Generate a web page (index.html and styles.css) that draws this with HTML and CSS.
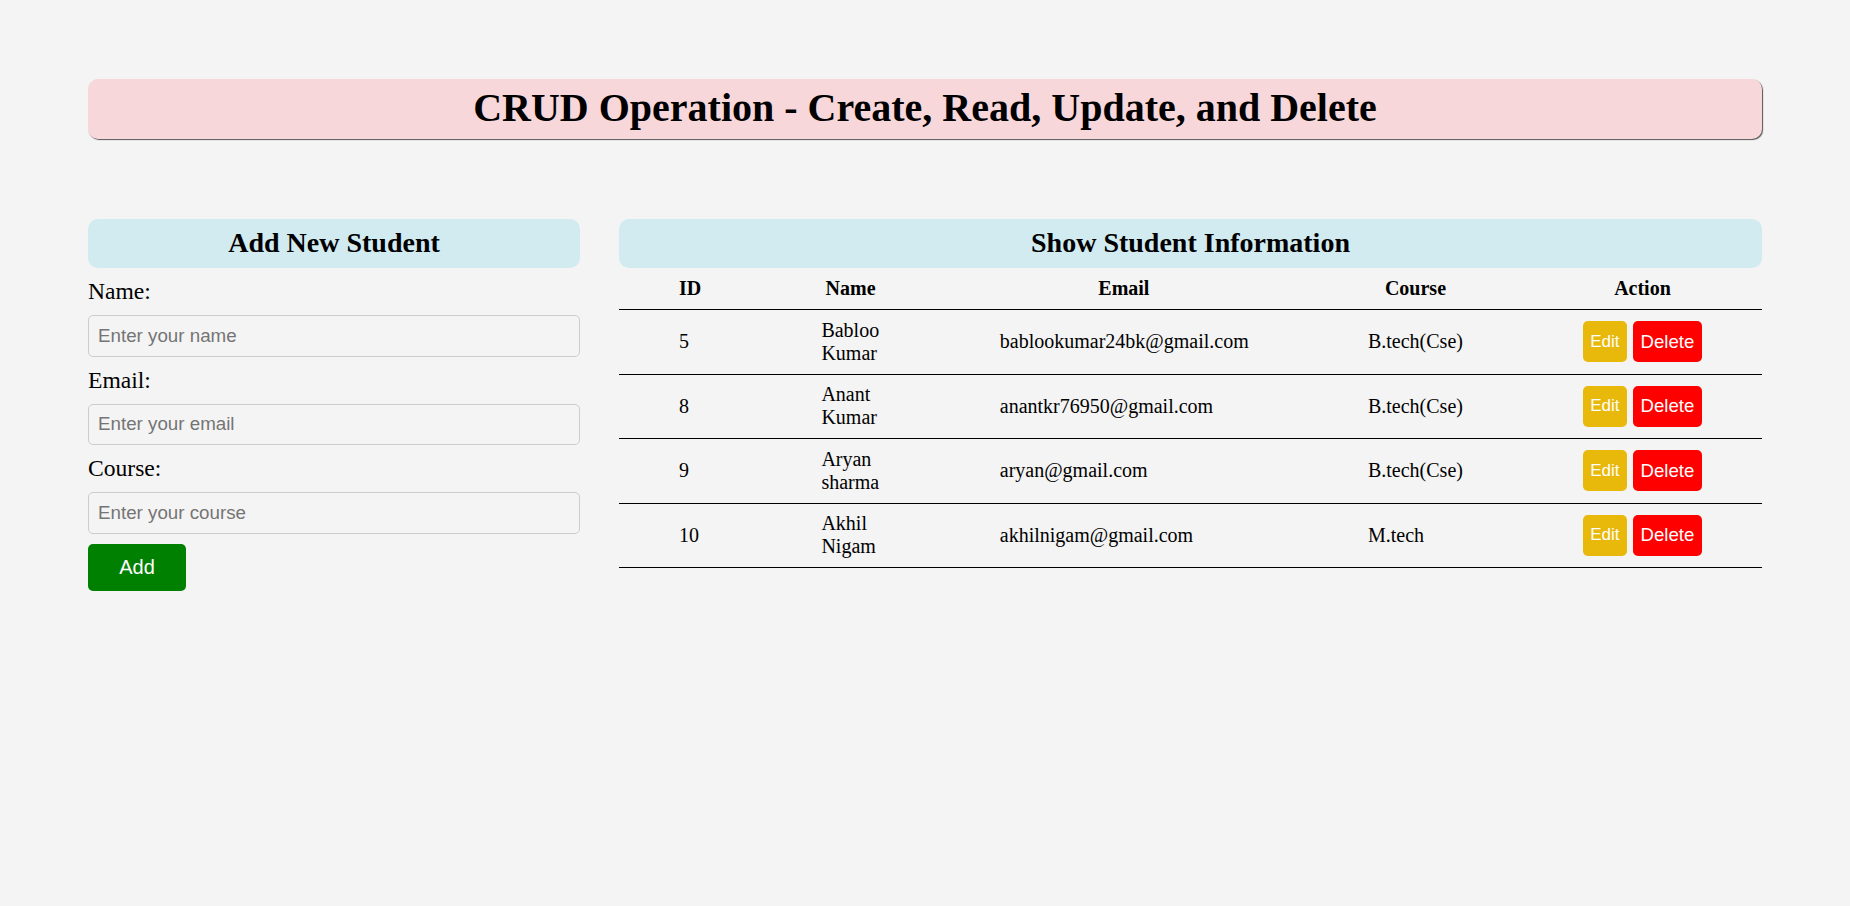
FILE: index.html
```html
<!DOCTYPE html>
<html lang="en">
<head>
<meta charset="utf-8">
<title>CRUD Operation</title>
<link rel="stylesheet" href="styles.css">
</head>
<body>
<div class="page">
  <h1 class="page-title">CRUD Operation - Create, Read, Update, and Delete</h1>
  <div class="content">
    <section class="form-panel">
      <h2 class="panel-title">Add New Student</h2>
      <form class="student-form">
        <label class="field-label" for="name">Name:</label>
        <input class="field-input" id="name" type="text" placeholder="Enter your name">
        <label class="field-label" for="email">Email:</label>
        <input class="field-input" id="email" type="email" placeholder="Enter your email">
        <label class="field-label" for="course">Course:</label>
        <input class="field-input" id="course" type="text" placeholder="Enter your course">
        <button class="add-btn" type="button">Add</button>
      </form>
    </section>
    <section class="table-panel">
      <h2 class="panel-title">Show Student Information</h2>
      <table class="student-table">
        <colgroup>
          <col class="col-id">
          <col class="col-name">
          <col class="col-email">
          <col class="col-course">
          <col class="col-action">
        </colgroup>
        <thead>
          <tr><th>ID</th><th>Name</th><th>Email</th><th>Course</th><th>Action</th></tr>
        </thead>
        <tbody>
          <tr>
            <td>5</td><td>Babloo Kumar</td><td>bablookumar24bk@gmail.com</td><td>B.tech(Cse)</td>
            <td><div class="actions"><button class="edit-btn" type="button">Edit</button><button class="delete-btn" type="button">Delete</button></div></td>
          </tr>
          <tr>
            <td>8</td><td>Anant Kumar</td><td>anantkr76950@gmail.com</td><td>B.tech(Cse)</td>
            <td><div class="actions"><button class="edit-btn" type="button">Edit</button><button class="delete-btn" type="button">Delete</button></div></td>
          </tr>
          <tr>
            <td>9</td><td>Aryan sharma</td><td>aryan@gmail.com</td><td>B.tech(Cse)</td>
            <td><div class="actions"><button class="edit-btn" type="button">Edit</button><button class="delete-btn" type="button">Delete</button></div></td>
          </tr>
          <tr>
            <td>10</td><td>Akhil Nigam</td><td>akhilnigam@gmail.com</td><td>M.tech</td>
            <td><div class="actions"><button class="edit-btn" type="button">Edit</button><button class="delete-btn" type="button">Delete</button></div></td>
          </tr>
        </tbody>
      </table>
    </section>
  </div>
</div>
</body>
</html>
```
FILE: styles.css
```css
* { box-sizing: border-box; }

body {
  margin: 0;
  background: #f4f4f4;
  color: #000;
  font-family: "Liberation Serif", "Times New Roman", serif;
}

.page {
  padding: 79px 88px 40px;
}

.page-title {
  margin: 0 0 80px;
  padding: 6px 0 8px;
  background: #f8d7da;
  border-radius: 10px;
  box-shadow: 1px 1px 1px #555;
  font-size: 40px;
  line-height: 46px;
  font-weight: bold;
  text-align: center;
}

.content {
  display: grid;
  grid-template-columns: 492px 1fr;
  column-gap: 39px;
  align-items: start;
}

.panel-title {
  margin: 0;
  padding: 8px 0 9px;
  background: #d1ebf0;
  border-radius: 10px;
  font-size: 28px;
  line-height: 32px;
  font-weight: bold;
  text-align: center;
}

.student-form {
  display: flex;
  flex-direction: column;
  align-items: flex-start;
}

.field-label {
  display: block;
  margin: 10px 0;
  font-size: 23.6px;
  line-height: 27px;
}

.field-input {
  width: 100%;
  height: 41.5px;
  padding: 0 9px;
  border: 1px solid #ccc;
  border-radius: 5px;
  background: transparent;
  font-family: "Liberation Sans", Arial, sans-serif;
  font-size: 18.75px;
  color: #000;
}

.field-input::placeholder {
  color: #757575;
}

.add-btn {
  margin-top: 10px;
  width: 98px;
  height: 47px;
  border: none;
  border-radius: 5px;
  background: #008000;
  color: #fff;
  font-family: "Liberation Sans", Arial, sans-serif;
  font-size: 20px;
}

.student-table {
  width: 100%;
  border-collapse: collapse;
  table-layout: fixed;
  font-size: 20px;
}

.col-id { width: 142.4px; }
.col-name { width: 178.4px; }
.col-email { width: 368.2px; }
.col-course { width: 215px; }
.col-action { width: 239px; }

.student-table th {
  padding: 9px 60px;
  line-height: 23px;
  font-weight: bold;
  text-align: center;
  border-bottom: 1px solid #000;
}

.student-table td {
  padding: 8.75px 60px;
  line-height: 23px;
  text-align: left;
  vertical-align: middle;
  border-bottom: 1px solid #000;
}

.actions {
  display: flex;
  gap: 6.3px;
  white-space: nowrap;
}

.edit-btn,
.delete-btn {
  height: 41px;
  border: none;
  border-radius: 5px;
  color: #fff;
  font-family: "Liberation Sans", Arial, sans-serif;
}

.edit-btn {
  padding: 0 7.2px;
  background: #e8b90a;
  font-size: 17px;
}

.delete-btn {
  padding: 0 7.6px;
  background: #ff0000;
  font-size: 18.6px;
}
```
